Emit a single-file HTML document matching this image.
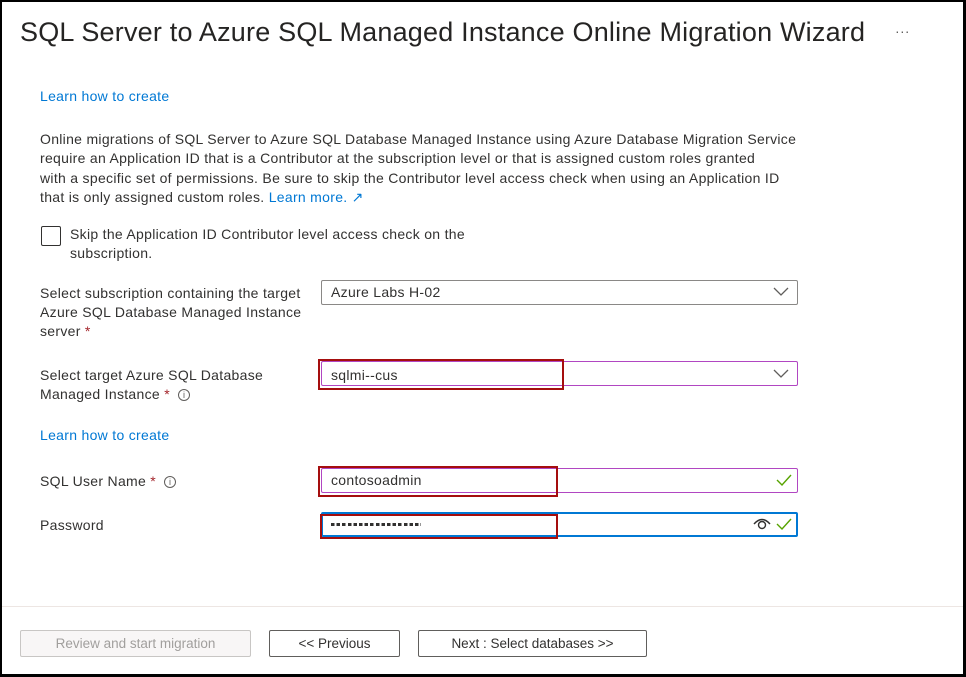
<!DOCTYPE html>
<html><head><meta charset="utf-8"><style>
*{box-sizing:border-box;margin:0;padding:0}
body{width:966px;height:677px;background:#fff;font-family:"Liberation Sans",sans-serif;color:#323130;position:relative;overflow:hidden}
.frame{position:absolute;left:0;top:0;width:966px;height:677px;border:2px solid #000;border-right-width:3px;border-bottom-width:3px}
.a{position:absolute;font-size:14px;letter-spacing:0.3px;line-height:19px;white-space:nowrap}
.link{color:#0078d4}
.req{color:#a4262c}
.box{position:absolute;height:25px;border:1px solid #8a8886;border-radius:2px;background:#fff}
.red{position:absolute;border:2.5px solid #a50e0e}
.btn{position:absolute;top:630px;height:27px;border:1px solid #605e5c;border-radius:2px;font-size:13.5px;line-height:25px;text-align:center;background:#fff;color:#323130}
.info{display:inline-block;width:12px;height:12px;border:1px solid #605e5c;border-radius:50%;font-size:9px;line-height:10px;text-align:center;vertical-align:middle;margin-left:8px;color:#605e5c;letter-spacing:0}
</style></head><body>
<div class="frame"></div>
<div class="a" style="left:20px;top:15px;font-size:27px;letter-spacing:0.2px;line-height:34px;color:#252423">SQL Server to Azure SQL Managed Instance Online Migration Wizard</div>
<div class="a" style="left:895px;top:22px;color:#605e5c">···</div>
<div class="a link" style="left:40px;top:87px">Learn how to create</div>
<div class="a" style="left:40px;top:130px;line-height:19.3px">Online migrations of SQL Server to Azure SQL Database Managed Instance using Azure Database Migration Service<br>require an Application ID that is a Contributor at the subscription level or that is assigned custom roles granted<br>with a specific set of permissions. Be sure to skip the Contributor level access check when using an Application ID<br>that is only assigned custom roles. <span class="link">Learn more. ↗</span></div>
<div style="position:absolute;left:41px;top:226px;width:20px;height:20px;border:1px solid #323130;border-radius:2px"></div>
<div class="a" style="left:70px;top:225px">Skip the Application ID Contributor level access check on the<br>subscription.</div>
<div class="a" style="left:40px;top:284px">Select subscription containing the target<br>Azure SQL Database Managed Instance<br>server <span class="req">*</span></div>
<div class="box" style="left:321px;top:280px;width:477px"></div>
<div class="a" style="left:331px;top:283px">Azure Labs H-02</div>
<svg style="position:absolute;left:773px;top:287px" width="16" height="10"><path d="M1 1L8 8L15 1" fill="none" stroke="#605e5c" stroke-width="1.3"/></svg>
<div class="a" style="left:40px;top:366px">Select target Azure SQL Database<br>Managed Instance <span class="req">*</span><span class="info">i</span></div>
<div class="box" style="left:321px;top:361px;width:477px;border-color:#b146c2"></div>
<div class="red" style="left:318px;top:359px;width:246px;height:31px"></div>
<div class="a" style="left:331px;top:366px">sqlmi--cus</div>
<svg style="position:absolute;left:773px;top:369px" width="16" height="10"><path d="M1 1L8 8L15 1" fill="none" stroke="#605e5c" stroke-width="1.3"/></svg>
<div class="a link" style="left:40px;top:426px">Learn how to create</div>
<div class="a" style="left:40px;top:472px">SQL User Name <span class="req">*</span><span class="info">i</span></div>
<div class="box" style="left:321px;top:468px;width:477px;border-color:#b146c2"></div>
<div class="red" style="left:318px;top:466px;width:240px;height:31px"></div>
<div class="a" style="left:331px;top:471px">contosoadmin</div>
<svg style="position:absolute;left:776px;top:474px" width="16" height="12"><path d="M1 6L6 11L15 1" fill="none" stroke="#57a300" stroke-width="1.4"/></svg>
<div class="a" style="left:40px;top:516px">Password</div>
<div class="box" style="left:321px;top:512px;width:477px;border:2px solid #0078d4"></div>
<div class="red" style="left:320px;top:514px;width:238px;height:25px"></div>
<div style="position:absolute;left:331px;top:523px;width:90px;height:3px;background:repeating-linear-gradient(90deg,#323130 0 3.5px,transparent 3.5px 5.6px)"></div>
<svg style="position:absolute;left:752px;top:515px" width="22" height="16"><path d="M2 9Q10 0 18 9" fill="none" stroke="#323130" stroke-width="1.4"/><circle cx="10" cy="10" r="3.5" fill="none" stroke="#323130" stroke-width="1.4"/></svg>
<svg style="position:absolute;left:776px;top:518px" width="16" height="12"><path d="M1 6L6 11L15 1" fill="none" stroke="#57a300" stroke-width="1.4"/></svg>
<div style="position:absolute;left:2px;top:606px;width:961px;height:1px;background:#ede6e3"></div>
<div class="btn" style="left:20px;width:231px;color:#a19f9d;border-color:#c8c6c4;background:#f8f6f6">Review and start migration</div>
<div class="btn" style="left:269px;width:131px">&lt;&lt; Previous</div>
<div class="btn" style="left:418px;width:229px">Next : Select databases &gt;&gt;</div>
</body></html>
